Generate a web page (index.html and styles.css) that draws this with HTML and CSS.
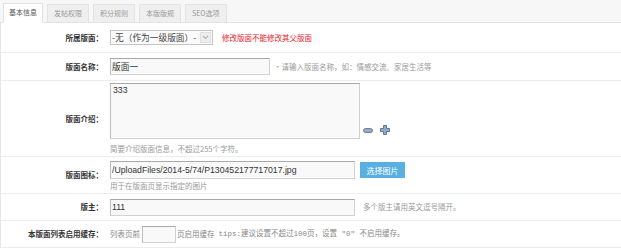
FILE: index.html
```html
<!DOCTYPE html>
<html lang="zh-CN">
<head>
    <meta charset="UTF-8">
    <meta name="viewport" content="width=device-width, initial-scale=1.0">
    <title>版面设置</title>
    <link rel="stylesheet" href="styles.css">
</head>
<body>
    <div class="tabs">
        <span class="tab active">基本信息</span>
        <span class="tab">发帖权限</span>
        <span class="tab">积分规则</span>
        <span class="tab">本版版规</span>
        <span class="tab">SEO选项</span>
    </div>
    <div class="form">
        <div class="row row-parent">
            <div class="label">所属版面：</div>
            <div class="field inline">
                <div class="select">
                    <span>-无（作为一级版面）-</span>
                    <span class="select-arrow">
                        <svg width="7" height="5" viewBox="0 0 7 5"><path d="M1 1 L3.5 3.5 L6 1" fill="none" stroke="#b5b5b5" stroke-width="1.2"/></svg>
                    </span>
                </div>
                <span class="warn">修改版面不能修改其父版面</span>
            </div>
        </div>
        <div class="row row-name">
            <div class="label">版面名称：</div>
            <div class="field inline">
                <input type="text" class="input input-name" value="版面一">
                <span class="hint">•请输入版面名称，如：情感交流、家居生活等</span>
            </div>
        </div>
        <div class="row row-intro">
            <div class="label">版面介绍：</div>
            <div class="field stack">
                <div class="area-line">
                    <textarea class="area">333</textarea>
                    <span class="resize">
                        <svg width="10" height="5" viewBox="0 0 10 5"><rect x="0.5" y="0.5" width="9" height="4" rx="2" fill="#9aabc0" stroke="#6f8198"/></svg>
                        <svg width="10" height="10" viewBox="0 0 10 10"><path d="M3.5 0.5 H6.5 V3.5 H9.5 V6.5 H6.5 V9.5 H3.5 V6.5 H0.5 V3.5 H3.5 Z" fill="#8fa9c8" stroke="#5f7896"/></svg>
                    </span>
                </div>
                <div class="hint hint-below">简要介绍版面信息，不超过255个字符。</div>
            </div>
        </div>
        <div class="row row-icon">
            <div class="label">版面图标：</div>
            <div class="field stack">
                <div class="inline">
                    <input type="text" class="input input-wide" value="/UploadFiles/2014-5/74/P130452177717017.jpg">
                    <button type="button" class="pick">选择图片</button>
                </div>
                <div class="hint hint-below">用于在版面页显示指定的图片</div>
            </div>
        </div>
        <div class="row row-owner">
            <div class="label">版主：</div>
            <div class="field inline">
                <input type="text" class="input input-wide" value="111">
                <span class="hint hint-owner">多个版主请用英文逗号隔开。</span>
            </div>
        </div>
        <div class="row row-cache">
            <div class="label">本版面列表启用缓存：</div>
            <div class="field inline cache">
                <span>列表页前</span>
                <input type="text" class="input input-small" value="">
                <span>页启用缓存</span>
                <span class="tips">tips:建议设置不超过100页，设置 "0" 不启用缓存。</span>
            </div>
        </div>
    </div>
</body>
</html>
```

FILE: styles.css
```css
body {
    margin: 0;
    padding: 0;
    background: #fff;
    color: #333;
    font-family: "Noto Sans CJK SC", sans-serif;
    font-size: 7.5px;
    line-height: 10px;
}
.tabs {
    display: flex;
    align-items: flex-end;
    gap: 4px;
    height: 22px;
    padding-left: 3px;
    background: #f7f7f7;
    border-bottom: 1px solid #e3e3e3;
}
.tab {
    height: 17px;
    line-height: 17px;
    padding: 0 6px;
    margin-bottom: -1px;
    border: 1px solid #e3e3e3;
    background: #efefef;
    color: #999;
    font-size: 7px;
}
.tab.active {
    height: 18px;
    background: #fff;
    border-bottom-color: #fff;
    color: #555;
    padding: 0 5px;
}
.form {
    border-left: 1px solid #e6e6e6;
}
.row {
    display: flex;
    box-sizing: border-box;
    border-bottom: 1px solid #ededed;
}
.row-parent { height: 30px; }
.row-name { height: 28px; }
.row-intro { height: 76px; }
.row-icon { height: 37px; }
.row-owner { height: 27px; }
.row-cache { height: 27px; }
.label {
    width: 102px;
    flex: none;
    display: flex;
    align-items: center;
    justify-content: flex-end;
    font-weight: bold;
    color: #333;
    white-space: nowrap;
}
.field {
    padding-left: 7px;
}
.inline {
    display: flex;
    align-items: center;
}
.stack {
    display: flex;
    flex-direction: column;
}
.row-intro .stack {
    padding-top: 2px;
}
.row-icon .stack {
    padding-top: 4px;
}
.select {
    width: 103px;
    height: 15px;
    box-sizing: border-box;
    display: flex;
    align-items: center;
    padding-left: 1px;
    border: 1px solid #c4c4c4;
    background: #fafafa;
    font-size: 8.7px;
    color: #444;
    white-space: nowrap;
}
.select-arrow {
    margin-left: auto;
    width: 11px;
    height: 11px;
    margin-right: 1px;
    display: flex;
    align-items: center;
    justify-content: center;
    background: #eee;
    border: 1px solid #e0e0e0;
    box-sizing: border-box;
}
.warn {
    margin-left: 9px;
    color: #e8202a;
}
.input {
    box-sizing: border-box;
    height: 17px;
    padding: 0 1px;
    border: 1px solid #d2d2d2;
    border-top-color: #a9a9a9;
    border-left-color: #bdbdbd;
    background: #f9f9f9;
    color: #333;
    font-family: "Liberation Sans", "Noto Sans CJK SC", sans-serif;
    font-size: 8.7px;
    outline: none;
}
.input-name {
    width: 160px;
}
.input-wide {
    width: 245px;
    height: 18px;
}
.row-owner .input-wide {
    height: 17px;
}
.input-small {
    width: 34px;
    margin: 0 1px 0 2px;
}
.hint {
    color: #999;
    margin-left: 4px;
    white-space: nowrap;
}
.hint-below {
    margin-left: 0;
}
.row-intro .hint-below {
    margin-top: 5px;
}
.row-icon .hint-below {
    margin-top: 2px;
}
.hint-owner {
    margin-left: 8px;
}
.area-line {
    display: flex;
    align-items: flex-end;
}
.area {
    box-sizing: border-box;
    width: 250px;
    height: 56px;
    padding: 1px 2px;
    margin: 0;
    border: 1px solid #d2d2d2;
    border-top-color: #a9a9a9;
    border-left-color: #bdbdbd;
    background: #f9f9f9;
    color: #333;
    font-family: "Liberation Sans", sans-serif;
    font-size: 8.7px;
    resize: none;
    outline: none;
}
.resize {
    display: flex;
    align-items: center;
    gap: 7px;
    margin: 0 0 4px 3px;
}
.pick {
    width: 45px;
    height: 16px;
    margin-left: 5px;
    padding: 0;
    border: none;
    background: #5aafe2;
    color: #fff;
    font-family: "Noto Sans CJK SC", sans-serif;
    font-size: 8px;
    cursor: pointer;
}
.cache {
    color: #888;
}
.tips {
    margin-left: 4px;
    font-family: "Liberation Mono", "Noto Sans CJK SC", monospace;
    font-size: 7.5px;
    color: #888;
}
```
